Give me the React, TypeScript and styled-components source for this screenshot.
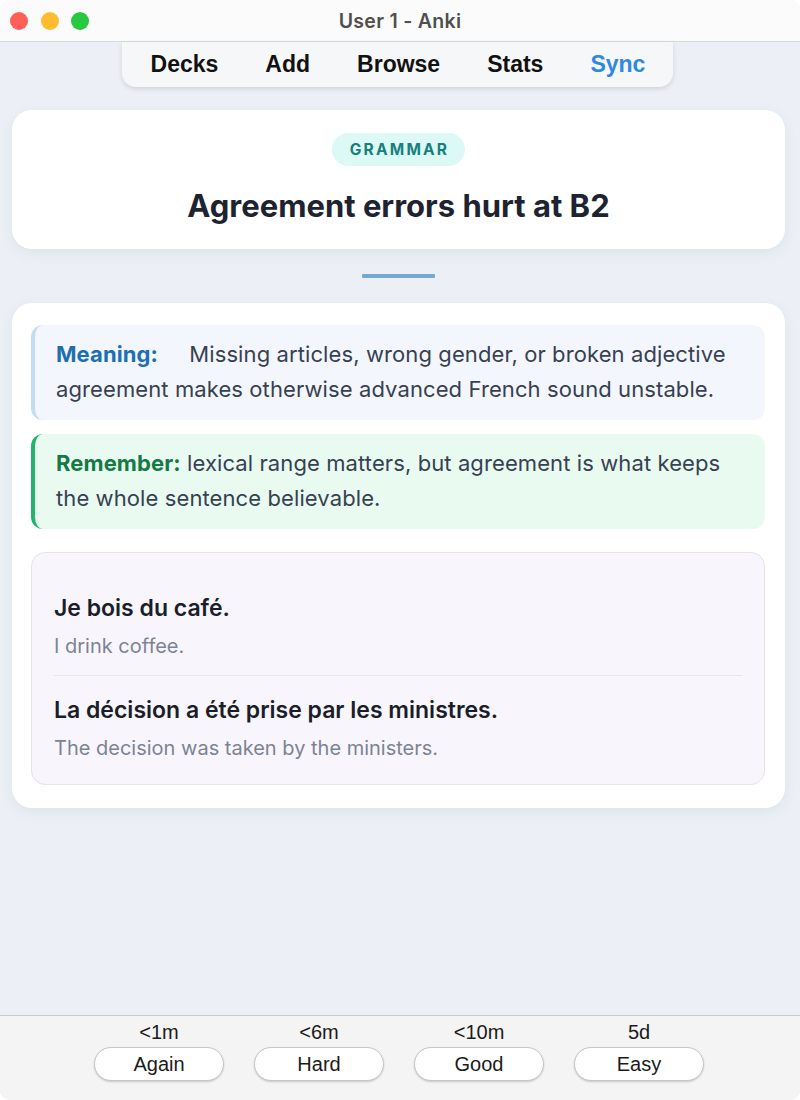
import React from "react";
import styled, { createGlobalStyle } from "styled-components";

const GlobalStyle = createGlobalStyle`
  html, body {
    margin: 0;
    padding: 0;
    background: #ffffff;
  }
  * {
    box-sizing: border-box;
  }
`;

const Window = styled.div`
  width: 800px;
  height: 1100px;
  display: flex;
  flex-direction: column;
  background: #ecf0f6;
  border-radius: 10px;
  overflow: hidden;
  font-family: Inter, "Noto Sans", sans-serif;
`;

const TitleBar = styled.div`
  height: 42px;
  flex-shrink: 0;
  display: grid;
  grid-template-columns: 1fr auto 1fr;
  align-items: center;
  background: #fbfbfb;
  border-bottom: 1px solid #d9d9d9;
`;

const Lights = styled.div`
  display: flex;
  gap: 12.5px;
  padding-left: 10px;
`;

const Light = styled.span<{ $color: string }>`
  width: 18px;
  height: 18px;
  border-radius: 50%;
  background: ${(p) => p.$color};
`;

const WindowTitle = styled.div`
  font-size: 19.5px;
  font-weight: 600;
  letter-spacing: 0.3px;
  color: #4f4f4f;
`;

const Toolbar = styled.nav`
  align-self: center;
  margin-left: -5px;
  height: 45px;
  display: flex;
  align-items: center;
  gap: 47px;
  padding: 0 28px 0 29px;
  background: #f6f7f9;
  border-radius: 0 0 14px 14px;
  box-shadow: 0 2px 5px rgba(0, 0, 0, 0.12);
`;

const NavItem = styled.span<{ $active?: boolean }>`
  font-family: "Liberation Sans", Arial, sans-serif;
  font-weight: 700;
  font-size: 23px;
  color: ${(p) => (p.$active ? "#2f88e2" : "#111111")};
`;

const Main = styled.main`
  flex: 1;
  display: flex;
  flex-direction: column;
  padding: 23px 15px 0 12px;
`;

const Card = styled.section`
  background: #ffffff;
  border-radius: 20px;
  box-shadow: 0 4px 14px rgba(40, 60, 90, 0.07);
`;

const HeaderCard = styled(Card)`
  height: 139px;
  display: flex;
  flex-direction: column;
  align-items: center;
  padding-top: 23px;
`;

const Badge = styled.span`
  height: 33px;
  padding: 0 16px 0 18px;
  display: flex;
  align-items: center;
  border-radius: 17px;
  background: #dcf9f6;
  color: #16807c;
  font-size: 15.5px;
  font-weight: 700;
  letter-spacing: 2.2px;
`;

const Heading = styled.h1`
  margin: 21px 0 0;
  font-size: 31px;
  line-height: 38px;
  font-weight: 700;
  color: #1d2331;
`;

const Rule = styled.div`
  align-self: center;
  width: 73px;
  height: 4px;
  margin: 25px 0 25px;
  background: #74a9d0;
  border-radius: 1px;
`;

const BodyCard = styled(Card)`
  display: flex;
  flex-direction: column;
  padding: 22px 20px 23px 19px;
`;

const Callout = styled.div<{ $bg: string; $edge: string }>`
  padding: 12px 20px 13px 21px;
  background: ${(p) => p.$bg};
  border-left: 4px solid ${(p) => p.$edge};
  border-radius: 12px;
  font-size: 22px;
  letter-spacing: 0.1px;
  line-height: 35px;
  color: #374151;
`;

const Label = styled.strong<{ $color: string; $wide?: boolean }>`
  display: inline-block;
  min-width: ${(p) => (p.$wide ? "127px" : "0")};
  font-weight: 700;
  color: ${(p) => p.$color};
`;

const Examples = styled.div`
  margin-top: 23px;
  padding: 21px 22px 7px;
  background: #f9f5fd;
  border: 1px solid #e6e2ef;
  border-radius: 14px;
`;

const Example = styled.div`
  padding: 20px 0 16px;
  border-bottom: 1px solid #e9e5f0;

  &:last-child {
    border-bottom: none;
  }
`;

const Phrase = styled.div`
  font-size: 23px;
  line-height: 28px;
  font-weight: 600;
  color: #1a1e29;
`;

const Gloss = styled.div`
  margin-top: 11px;
  font-size: 20px;
  line-height: 26px;
  color: #7b8494;
`;

const AnswerBar = styled.footer`
  height: 85px;
  flex-shrink: 0;
  display: flex;
  justify-content: center;
  gap: 30px;
  padding: 5px 2px 0 0;
  background: #f4f4f4;
  border-top: 1px solid #c9c9c9;
`;

const Answer = styled.div`
  width: 130px;
  display: flex;
  flex-direction: column;
  align-items: center;
  font-family: "Liberation Sans", Arial, sans-serif;
`;

const Interval = styled.span`
  font-size: 20px;
  line-height: 22px;
  color: #1b1b1b;
`;

const AnswerButton = styled.button`
  margin-top: 4px;
  width: 130px;
  height: 34px;
  border-radius: 17px;
  border: 1px solid #c6c6c6;
  background: #ffffff;
  box-shadow: 0 1px 2px rgba(0, 0, 0, 0.18);
  font-family: inherit;
  font-size: 20px;
  color: #1b1b1b;
  cursor: pointer;
`;

const tabs = ["Decks", "Add", "Browse", "Stats", "Sync"];

const examples = [
  { fr: "Je bois du café.", en: "I drink coffee." },
  {
    fr: "La décision a été prise par les ministres.",
    en: "The decision was taken by the ministers.",
  },
];

const answers = [
  { due: "<1m", label: "Again" },
  { due: "<6m", label: "Hard" },
  { due: "<10m", label: "Good" },
  { due: "5d", label: "Easy" },
];

const App = () => {
  return (
    <>
      <GlobalStyle />
      <Window>
        <TitleBar>
          <Lights>
            <Light $color="#fe5f57" />
            <Light $color="#febc2e" />
            <Light $color="#28c840" />
          </Lights>
          <WindowTitle>User 1 - Anki</WindowTitle>
          <div />
        </TitleBar>

        <Toolbar>
          {tabs.map((t) => (
            <NavItem key={t} $active={t === "Sync"}>
              {t}
            </NavItem>
          ))}
        </Toolbar>

        <Main>
          <HeaderCard>
            <Badge>GRAMMAR</Badge>
            <Heading>Agreement errors hurt at B2</Heading>
          </HeaderCard>

          <Rule />

          <BodyCard>
            <Callout $bg="#f3f7fd" $edge="#c2ddf3">
              <Label $color="#1d6fb0" $wide>
                Meaning:
              </Label>{" "}
              Missing articles, wrong gender, or broken adjective agreement
              makes otherwise advanced French sound unstable.
            </Callout>
            <Callout $bg="#e9fbf0" $edge="#22b46e" style={{ marginTop: 14 }}>
              <Label $color="#157a44">Remember:</Label> lexical range matters,
              but agreement is what keeps the whole sentence believable.
            </Callout>

            <Examples>
              {examples.map((ex) => (
                <Example key={ex.fr}>
                  <Phrase>{ex.fr}</Phrase>
                  <Gloss>{ex.en}</Gloss>
                </Example>
              ))}
            </Examples>
          </BodyCard>
        </Main>

        <AnswerBar>
          {answers.map((a) => (
            <Answer key={a.label}>
              <Interval>{a.due}</Interval>
              <AnswerButton>{a.label}</AnswerButton>
            </Answer>
          ))}
        </AnswerBar>
      </Window>
    </>
  );
};

export default App;
